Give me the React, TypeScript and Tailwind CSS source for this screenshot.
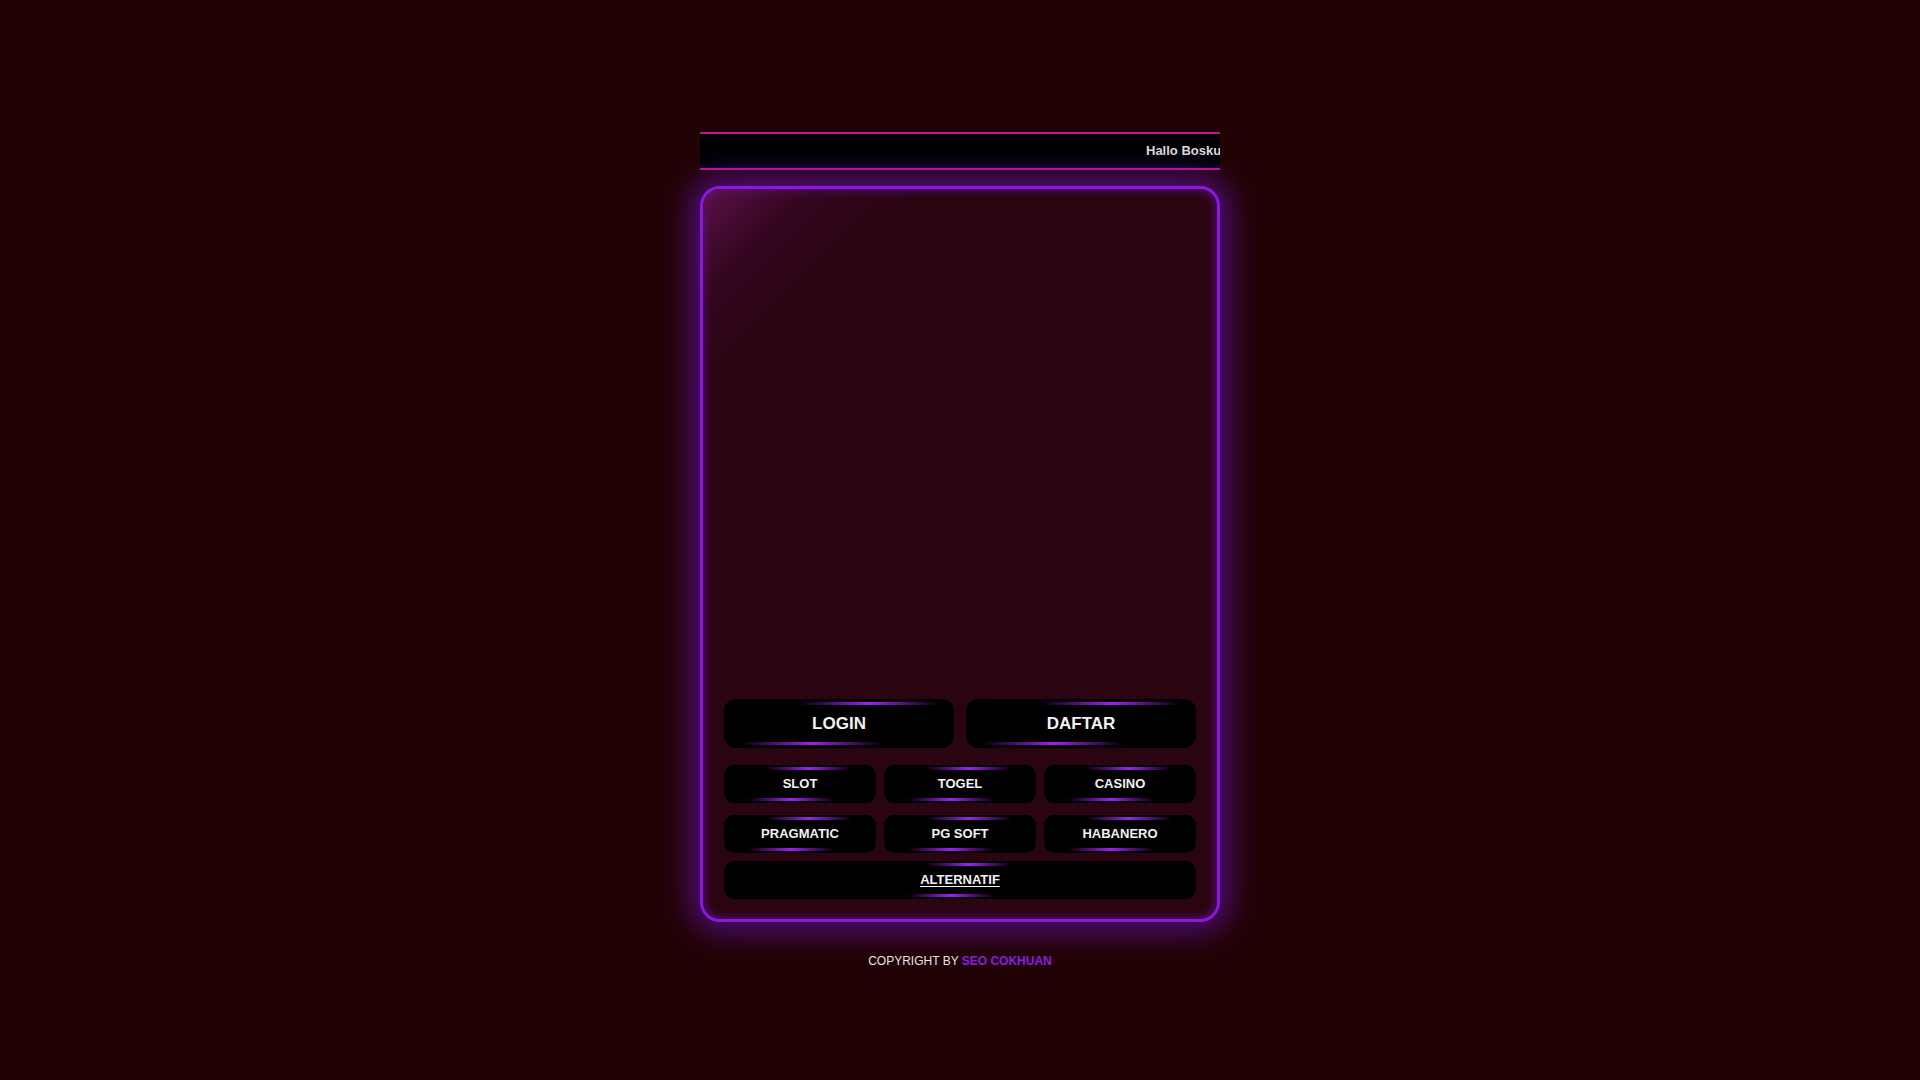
import React from 'react';

const smallLinks = ['SLOT', 'TOGEL', 'CASINO', 'PRAGMATIC', 'PG SOFT', 'HABANERO'];

function GlowLines({ wide = false }: { wide?: boolean }) {
  return (
    <>
      <span
        className={
          wide
            ? 'pointer-events-none absolute top-[3px] left-[32%] h-[3px] w-[62%] bg-gradient-to-r from-transparent via-[#a020f0] to-transparent'
            : 'pointer-events-none absolute top-[2px] left-[calc(50%-34px)] h-[3px] w-[86px] bg-gradient-to-r from-transparent via-[#a020f0] to-transparent'
        }
      />
      <span
        className={
          wide
            ? 'pointer-events-none absolute bottom-[3px] left-[7%] h-[3px] w-[62%] bg-gradient-to-r from-transparent via-[#a020f0] to-transparent'
            : 'pointer-events-none absolute bottom-[2px] left-[calc(50%-52px)] h-[3px] w-[86px] bg-gradient-to-r from-transparent via-[#a020f0] to-transparent'
        }
      />
    </>
  );
}

export default function App() {
  return (
    <div className="min-h-screen bg-[#220305] font-['Liberation_Sans',Arial,sans-serif]">
      <div className="mx-auto w-[520px] pt-[132px]">
        {/* running text */}
        <div className="flex h-[38px] items-center overflow-hidden border-y-2 border-[#c8109e] bg-gradient-to-b from-black via-black to-[#06000e]">
          <span className="whitespace-nowrap pl-[446px] text-[13px] font-bold text-[#dcdcdc]">
            Hallo Bosku, Selamat Datang
          </span>
        </div>

        {/* card */}
        <div className="relative mt-4 overflow-hidden rounded-[20px] border-[3px] border-[#8a18e0] bg-[#2a0410] px-[21px] pt-[21px] pb-[20px] shadow-[0_0_30px_8px_rgba(120,20,220,0.6),inset_0_0_10px_2px_rgba(130,20,230,0.45)]">
          <div className="pointer-events-none absolute inset-0 bg-[linear-gradient(135deg,rgba(105,20,95,0.75)_0%,rgba(70,10,60,0.3)_9%,transparent_18%)]" />
          <div className="h-[472px] w-[472px]" />

          <div className="relative mt-[17px] grid grid-cols-2 gap-3">
            {['LOGIN', 'DAFTAR'].map((t) => (
              <a
                key={t}
                className="relative flex h-[49px] items-center justify-center rounded-[12px] bg-black text-[17px] font-bold text-[#f2f2f2]"
              >
                <GlowLines wide />
                {t}
              </a>
            ))}
          </div>

          <div className="relative mt-[17px] grid grid-cols-3 gap-x-2 gap-y-[12px]">
            {smallLinks.map((t) => (
              <a
                key={t}
                className="relative flex h-[38px] items-center justify-center rounded-[10px] bg-black text-[13px] font-bold text-[#f2f2f2]"
              >
                <GlowLines />
                {t}
              </a>
            ))}
          </div>

          <a className="relative mt-2 flex h-[38px] items-center justify-center rounded-[10px] bg-black text-[13px] font-bold text-[#f2f2f2] underline underline-offset-2">
            <GlowLines />
            ALTERNATIF
          </a>
        </div>

        <p className="mt-[30px] text-center text-[12px] text-[#e6e6e6]">
          COPYRIGHT BY <span className="font-bold text-[#8a1ee6]">SEO COKHUAN</span>
        </p>
      </div>
    </div>
  );
}
